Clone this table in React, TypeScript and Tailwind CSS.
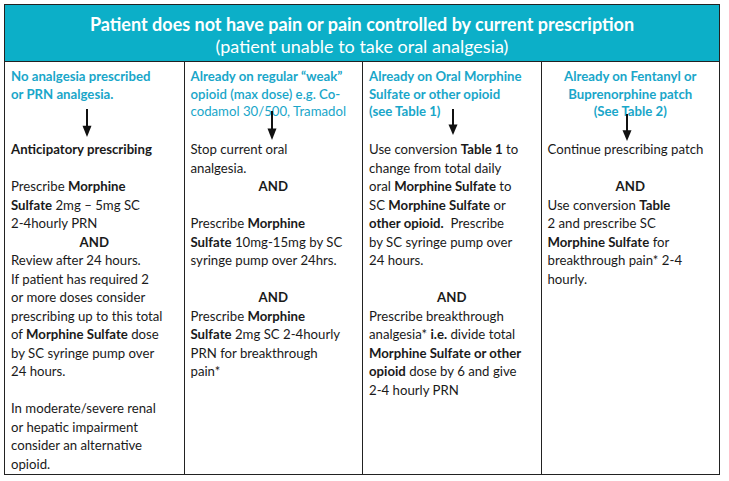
import React from "react";

type Line = React.ReactNode;

const B = ({ children }: { children: React.ReactNode }) => (
  <span className="font-bold">{children}</span>
);

function Arrow({ className }: { className: string }) {
  return (
    <svg className={`absolute ${className}`} width="10" viewBox="0 0 10 30" preserveAspectRatio="none">
      <line x1="5" y1="0" x2="5" y2="20" stroke="#111" strokeWidth="2" />
      <polygon points="0.5,18 9.5,18 5,30" fill="#111" />
    </svg>
  );
}

function Column({
  heading,
  headingCenter,
  lines,
  first,
}: {
  heading: Line[];
  headingCenter?: boolean;
  lines: Line[];
  first?: boolean;
}) {
  return (
    <div className={`px-[6px] pt-[6px] ${first ? "" : "border-l-[1.5px] border-[#222]"}`}>
      <div
        className={`h-[72px] text-[#19a6c9] leading-[17.5px] ${headingCenter ? "text-center" : ""}`}
      >
        {heading.map((h, i) => (
          <div key={i} className="whitespace-nowrap">
            {h}
          </div>
        ))}
      </div>
      <div className="text-[#1a1a1a] leading-[18.5px]">
        {lines.map((l, i) =>
          l === "AND" ? (
            <div key={i} className="text-center font-bold">
              AND
            </div>
          ) : (
            <div key={i} className="whitespace-nowrap">
              {l === "" ? "\u00a0" : l}
            </div>
          )
        )}
      </div>
    </div>
  );
}

export default function App() {
  return (
    <div
      className="w-[729px] h-[481px] bg-white pt-[4px] pl-[4px]"
      style={{ fontFamily: "Lato, 'Open Sans', sans-serif" }}
    >
      <div className="relative w-[716px] h-[471px] border-[1.5px] border-[#222] flex flex-col text-[13.2px]">
        <div className="h-[57px] bg-[#0cafc8] text-white text-center text-[18px] leading-[22px] pt-[8px] border-b-[1.5px] border-[#222]">
          <div className="font-bold">
            Patient does not have pain or pain controlled by current prescription
          </div>
          <div>(patient unable to take oral analgesia)</div>
        </div>
        <div className="grid grid-cols-4 flex-1">
          <Column
            first
            heading={[<B>No analgesia prescribed</B>, <B>or PRN analgesia.</B>]}
            lines={[
              <B>Anticipatory prescribing</B>,
              "",
              <>
                Prescribe <B>Morphine</B>
              </>,
              <>
                <B>Sulfate</B> 2mg – 5mg SC
              </>,
              "2-4hourly PRN",
              "AND",
              "Review after 24 hours.",
              "If patient has required 2",
              "or more doses consider",
              "prescribing up to this total",
              <>
                of <B>Morphine Sulfate</B> dose
              </>,
              "by SC syringe pump over",
              "24 hours.",
              "",
              "In moderate/severe renal",
              "or hepatic impairment",
              "consider an alternative",
              "opioid.",
            ]}
          />
          <Column
            heading={[
              <B>Already on regular “weak”</B>,
              <span className="font-semibold">opioid (max dose) e.g. Co-</span>,
              "codamol 30/500, Tramadol",
            ]}
            lines={[
              "Stop current oral",
              "analgesia.",
              "AND",
              "",
              <>
                Prescribe <B>Morphine</B>
              </>,
              <>
                <B>Sulfate</B> 10mg-15mg by SC
              </>,
              "syringe pump over 24hrs.",
              "",
              "AND",
              <>
                Prescribe <B>Morphine</B>
              </>,
              <>
                <B>Sulfate</B> 2mg SC 2-4hourly
              </>,
              "PRN for breakthrough",
              "pain*",
            ]}
          />
          <Column
            heading={[
              <B>Already on Oral Morphine</B>,
              <B>Sulfate or other opioid</B>,
              <B>(see Table 1)</B>,
            ]}
            lines={[
              <>
                Use conversion <B>Table 1</B> to
              </>,
              "change from total daily",
              <>
                oral <B>Morphine Sulfate</B> to
              </>,
              <>
                SC <B>Morphine Sulfate</B> or
              </>,
              <>
                <B>other opioid.</B>&nbsp; Prescribe
              </>,
              "by SC syringe pump over",
              "24 hours.",
              "",
              "AND",
              "Prescribe breakthrough",
              <>
                analgesia* <B>i.e.</B> divide total
              </>,
              <B>Morphine Sulfate or other</B>,
              <>
                <B>opioid</B> dose by 6 and give
              </>,
              "2-4 hourly PRN",
            ]}
          />
          <Column
            headingCenter
            heading={[
              <B>Already on Fentanyl or</B>,
              <B>Buprenorphine patch</B>,
              <B>(See Table 2)</B>,
            ]}
            lines={[
              "Continue prescribing patch",
              "",
              "AND",
              <>
                Use conversion <B>Table</B>
              </>,
              "2 and prescribe SC",
              <>
                <B>Morphine Sulfate</B> for
              </>,
              "breakthrough pain* 2-4",
              "hourly.",
            ]}
          />
        </div>
        <Arrow className="left-[77px] top-[104px] h-[28px]" />
        <Arrow className="left-[262px] top-[106px] h-[29px]" />
        <Arrow className="left-[443px] top-[104px] h-[26px]" />
        <Arrow className="left-[617px] top-[109px] h-[27px]" />
      </div>
    </div>
  );
}
